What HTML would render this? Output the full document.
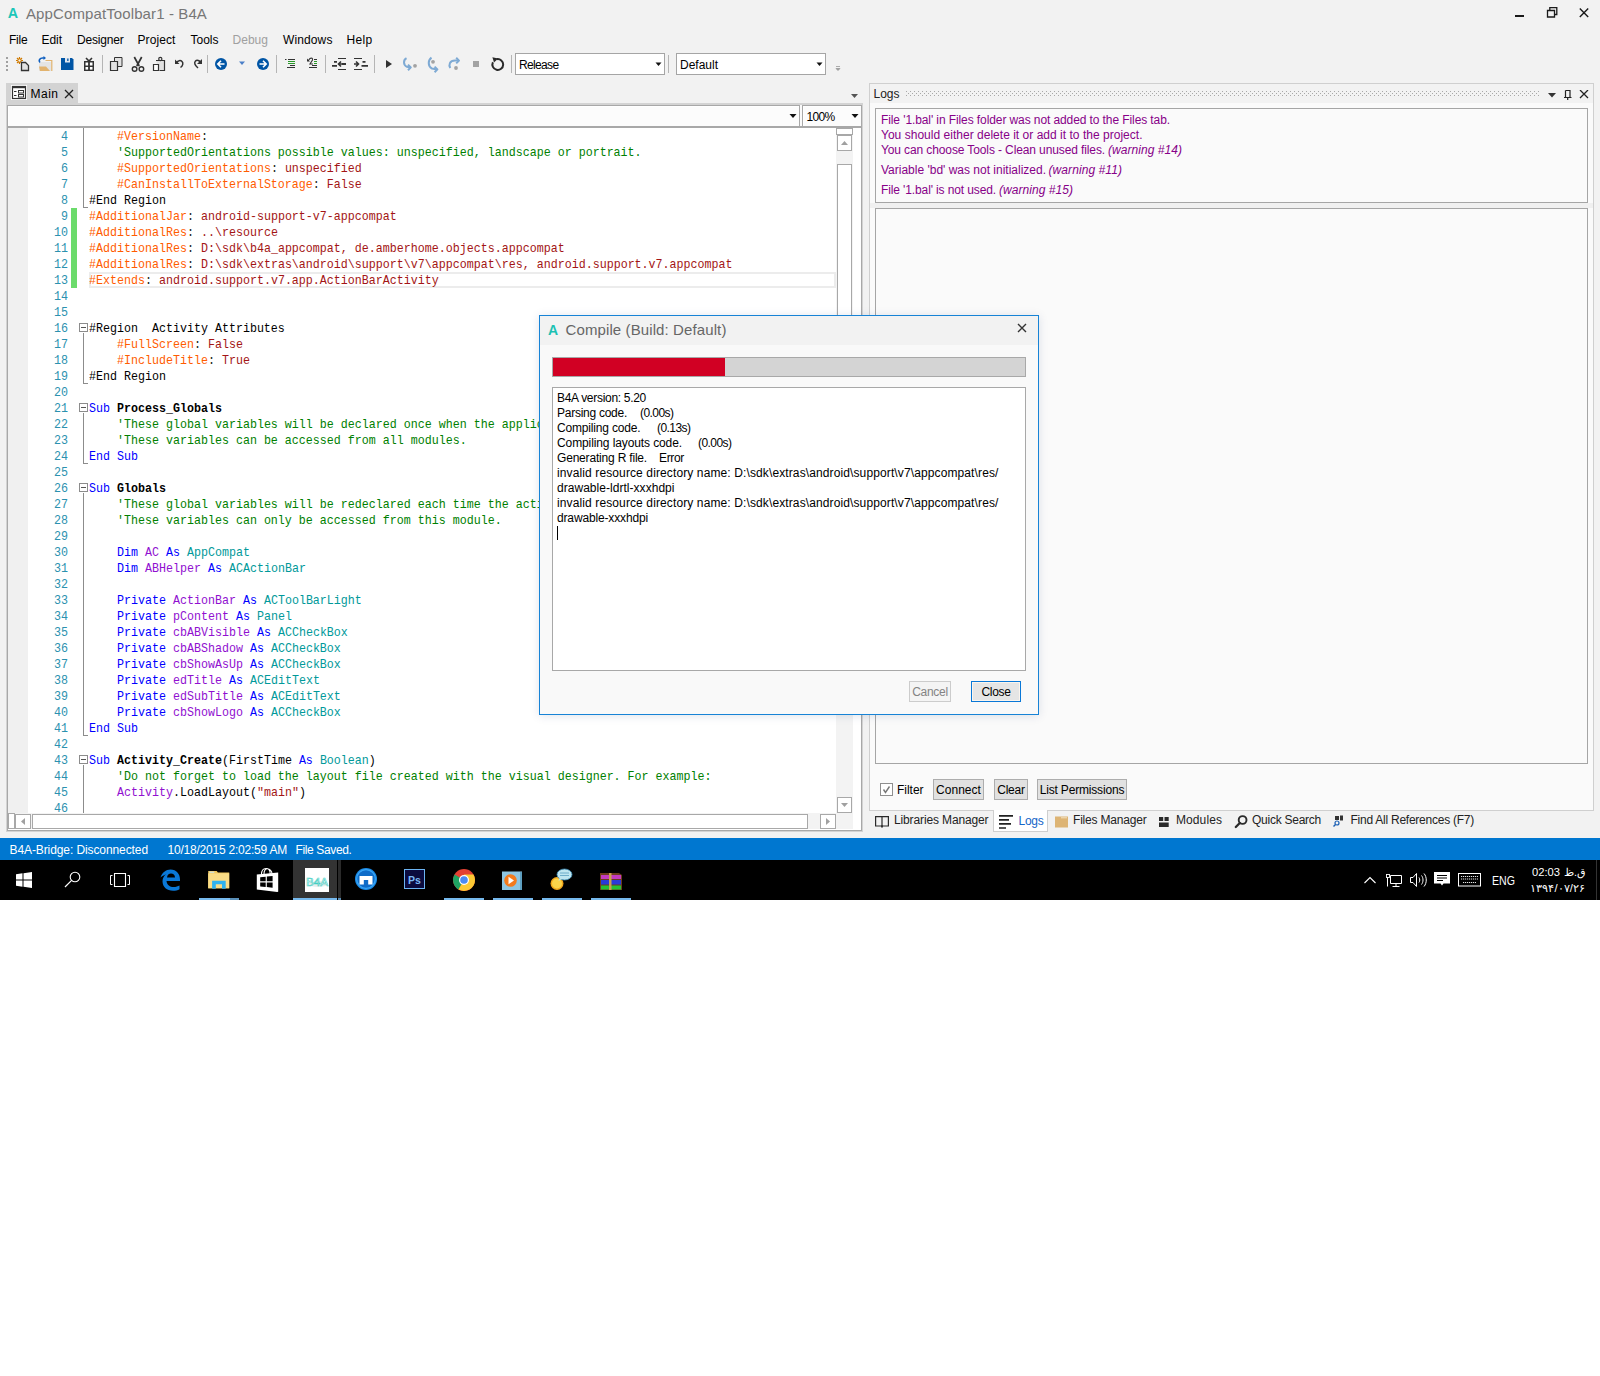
<!DOCTYPE html>
<html><head><meta charset="utf-8"><title>B4A</title>
<style>
*{margin:0;padding:0;box-sizing:border-box}
html,body{width:1600px;height:1376px;background:#fff;overflow:hidden;font-family:"Liberation Sans",sans-serif;color:#000}
.a{position:absolute}
.t{position:absolute;white-space:pre;line-height:1}
#app{position:absolute;left:0;top:0;width:1600px;height:860px;background:#f2f2f2;overflow:hidden}
/* editor */
#edframe{left:6px;top:103px;width:857px;height:729px;background:#d3d3d3}
#edin{left:7px;top:105px;width:855px;height:726px;background:#fff;border:1px solid #a8a8a8}
#code{left:8px;top:128px;width:828px;height:685px;background:#fff;overflow:hidden}
.gut{left:0;top:0;width:20px;height:685px;background:#f0f0f0}
.ln{position:absolute;left:20px;width:40px;text-align:right;height:16px;font:11.67px/16px "Liberation Mono",monospace;color:#2b91af;padding-top:0px;transform:scaleY(1.13);transform-origin:0 3.5px}
.cl{position:absolute;left:81px;height:16px;font:11.67px/16px "Liberation Mono",monospace;white-space:pre;padding-top:0px;transform:scaleY(1.13);transform-origin:0 3px}
.fbox{position:absolute;left:71px;width:9px;height:9px;border:1px solid #8c8c8c;background:#fff}
.fbox:after{content:"";position:absolute;left:1px;top:3px;width:5px;height:1px;background:#555}
.fv{position:absolute;left:75px;width:1px;background:#8c8c8c}
.fh{position:absolute;left:75px;width:5px;height:1px;background:#8c8c8c}
.sbtn{position:absolute;background:#fff;border:1px solid #a8a8a8}
/* logs */
#logpanel{left:869px;top:83px;width:725px;height:728px;background:#fafafa;border:1px solid #cfcfcf}
.btn{position:absolute;height:21px;background:#e1e1e1;border:1px solid #adadad;font-size:12px;line-height:20px;text-align:center;white-space:pre}
.lg{position:absolute;white-space:pre;font-size:12px;line-height:1;color:#870088}
.lg i{font-style:italic}
.dl{position:absolute;left:557px;white-space:pre;font-size:12px;line-height:15px;height:15px;color:#000}
/* dialog */
#dlg{left:539px;top:316px;width:501px;height:400px;background:#f9f9f9;border:1px solid #1883d7;box-shadow:0 0 10px rgba(0,0,0,0.25)}
/* status & taskbar */
#status{left:0;top:838px;width:1600px;height:22px;background:#0077d0}
#taskbar{left:0;top:860px;width:1600px;height:40px;background:#000}
</style></head><body>
<div id="app">
  <!-- title bar -->
  <div class="t" style="left:7.8px;top:5.5px;font-size:14.3px;font-weight:bold;color:#1cc6b9">A</div>
  <div class="t" style="left:26px;top:6px;font-size:15px;color:#777;--w:181px;letter-spacing:0.111px">AppCompatToolbar1 - B4A</div>
  <!-- window buttons -->
  <div class="a" style="left:1515px;top:15px;width:9px;height:2px;background:#1a1a1a"></div>
  <svg class="a" style="left:1546px;top:6px" width="12" height="12"><path d="M1.5 4.5h7v6.5h-7z M3.8 4.5v-2.8h7v6.8h-2.3" fill="none" stroke="#1a1a1a" stroke-width="1.3"/></svg>
  <svg class="a" style="left:1578px;top:7px" width="12" height="12"><path d="M1.8 1.5L10.2 9.9M10.2 1.5L1.8 9.9" stroke="#1a1a1a" stroke-width="1.4"/></svg>

  <!-- menu -->
  <div class="t" style="left:9px;top:34px;font-size:12px;--w:18.5px;letter-spacing:-0.211px">File</div>
  <div class="t" style="left:41.5px;top:34px;font-size:12px;--w:20.5px;letter-spacing:-0.047px">Edit</div>
  <div class="t" style="left:77px;top:34px;font-size:12px;--w:46.5px;letter-spacing:-0.191px">Designer</div>
  <div class="t" style="left:137.5px;top:34px;font-size:12px;--w:38px;letter-spacing:0.092px">Project</div>
  <div class="t" style="left:190.5px;top:34px;font-size:12px;--w:28px;letter-spacing:-0.003px">Tools</div>
  <div class="t" style="left:232.5px;top:34px;font-size:12px;color:#a0a0a0;--w:35.5px;letter-spacing:0.025px">Debug</div>
  <div class="t" style="left:283px;top:34px;font-size:12px;--w:49.5px;letter-spacing:0.116px">Windows</div>
  <div class="t" style="left:346.5px;top:34px;font-size:12px;--w:26px;letter-spacing:0.328px">Help</div>

  <svg class="a" style="left:0;top:50px" width="520" height="28" viewBox="0 50 520 28">
 <!-- grip -->
 <g fill="#a0a0a0"><rect x="6" y="57" width="2" height="2"/><rect x="6" y="61" width="2" height="2"/><rect x="6" y="65" width="2" height="2"/><rect x="6" y="69" width="2" height="2"/></g>
 <!-- new -->
 <g stroke="#d07a00" stroke-width="1.2"><path d="M19.5 57v7M16 60.5h7M17 58l5 5M22 58l-5 5"/></g>
 <circle cx="19.5" cy="60.5" r="1.6" fill="#f2f2f2" stroke="#d07a00" stroke-width="1"/>
 <path d="M21.5 62.5h4l3 3v5h-7z" fill="#e2e2e2" stroke="#333" stroke-width="1.3"/>
 <!-- open -->
 <path d="M39 62h12.5v9H39z" fill="#e4e4e4"/>
 <path d="M45.5 60.5h6.3v10.5" fill="none" stroke="#e2b36e" stroke-width="1.2"/>
 <path d="M39 66.5h7l4 4.5H40z" fill="#e2b36e"/>
 <path d="M40 62.5c-2-2 0-4.5 2.5-4.5h1.5" fill="none" stroke="#1060c0" stroke-width="1.6"/>
 <path d="M43.5 56l2.5 2-2.5 2z" fill="#1060c0"/>
 <!-- save -->
 <path d="M61 58h11l1.5 1.5V70H61z" fill="#0055a5"/>
 <rect x="65" y="58" width="5" height="4.5" fill="#dfe6ef"/>
 <rect x="67.2" y="58.5" width="1.3" height="2.5" fill="#0055a5"/>
 <!-- gift -->
 <rect x="84" y="61" width="10" height="10" fill="#333"/>
 <g fill="#fff"><rect x="85.5" y="62.5" width="2.6" height="3"/><rect x="89.9" y="62.5" width="2.6" height="3"/><rect x="85.5" y="67" width="2.6" height="2.6"/><rect x="89.9" y="67" width="2.6" height="2.6"/></g>
 <path d="M86 58l3 3 3-3" fill="none" stroke="#333" stroke-width="1.6"/>
 <!-- sep -->
 <g fill="#b5b5b5"><rect x="102" y="55" width="1" height="18"/><rect x="207" y="55" width="1" height="18"/><rect x="276" y="55" width="1" height="18"/><rect x="325" y="55" width="1" height="18"/><rect x="374" y="55" width="1" height="18"/><rect x="511" y="55" width="1" height="18"/></g>
 <!-- copy -->
 <path d="M114.5 57.5h7.5v9h-7.5z" fill="#e2e2e2" stroke="#333" stroke-width="1"/>
 <path d="M110.5 61.5h7v9h-7z" fill="#e2e2e2" stroke="#333" stroke-width="1.2"/>
 <!-- cut -->
 <path d="M134.3 57l4.9 9M141.7 57l-4.9 9" stroke="#333" stroke-width="1.7" fill="none"/>
 <circle cx="134.6" cy="69" r="2.3" fill="none" stroke="#333" stroke-width="1.4"/>
 <circle cx="141.4" cy="69" r="2.3" fill="none" stroke="#333" stroke-width="1.4"/>
 <!-- paste -->
 <path d="M156 60.5h8.5v10h-5" fill="#e2e2e2" stroke="#333" stroke-width="1.2"/>
 <circle cx="160.3" cy="59" r="1.6" fill="#f2f2f2" stroke="#333" stroke-width="1.2"/>
 <path d="M153.5 64.5h5v6h-5z" fill="#fff" stroke="#333" stroke-width="1.2"/>
 <!-- undo -->
 <path d="M176.5 62.5c1.5-2 4-2.5 5.5-1s1 4-1.5 6" fill="none" stroke="#333" stroke-width="1.5"/>
 <path d="M175 59.5v4.5h4.5z" fill="#333"/>
 <!-- redo -->
 <path d="M201 62.5c-1.5-2-4-3-5.5-1.5s-1 4 2.5 7" fill="none" stroke="#333" stroke-width="1.5"/>
 <path d="M202 59v5h-5z" fill="#333"/>
 <!-- back -->
 <circle cx="221" cy="64" r="6" fill="#0055a5"/>
 <path d="M224.5 64h-6M221 60.8l-3.2 3.2 3.2 3.2" fill="none" stroke="#fff" stroke-width="1.6"/>
 <path d="M239 61.5h6l-3 3.5z" fill="#4b7fc8"/>
 <!-- fwd -->
 <circle cx="263" cy="64" r="6" fill="#0055a5"/>
 <path d="M259.5 64h6M263 60.8l3.2 3.2-3.2 3.2" fill="none" stroke="#fff" stroke-width="1.6"/>
 <!-- format -->
 <g stroke-width="1" fill="none">
  <path d="M285 59.5h1.5M288 59.5h7" stroke="#333"/>
  <path d="M288 61.5h7M288 63.5h7" stroke="#2a9a2a"/>
  <path d="M290 65.5h5M287 67.5h8" stroke="#333"/>
 </g>
 <!-- comment -->
 <path d="M308 61l2-2.5c1.5-1 3 0 2.5 1.5l-2.5 4h3" fill="none" stroke="#333" stroke-width="1.1"/>
 <path d="M307 58.5v3h3z" fill="#333"/>
 <g stroke-width="1" fill="none"><path d="M314 59.5h3M312 65.5h5M309 67.5h8" stroke="#333"/><path d="M314 61.5h3M314 63.5h3" stroke="#2a9a2a"/></g>
 <!-- outdent -->
 <g stroke="#333" fill="none">
  <path d="M338 58.5h8M338 69.5h8" stroke-width="1"/>
  <path d="M334 61.8h3M332 65.8h5M342 64h4" stroke-width="1.8"/>
  <path d="M342 64h-3.5M341 61.5l-2.5 2.5 2.5 2.5" stroke-width="1.6"/>
 </g>
 <!-- indent -->
 <g stroke="#333" fill="none">
  <path d="M354 58.5h8M354 69.5h8" stroke-width="1"/>
  <path d="M362.5 61.8h3M361.5 65.8h6.5" stroke-width="1.8"/>
  <path d="M354 64h4M356 61.5l2.5 2.5-2.5 2.5" stroke-width="1.6"/>
 </g>
 <!-- play -->
 <path d="M386 60v8l6-4z" fill="#333"/>
 <!-- step over -->
 <g fill="none" stroke="#7eaad4" stroke-width="2" stroke-linejoin="round">
  <path d="M406.5 58.2C403.2 60 403 64.8 407 66.8L410.5 67.4"/>
  <path d="M408 64.6l2.8 2.8-2.8 2.8"/>
 </g>
 <circle cx="415" cy="65.8" r="1.9" fill="#a3a3a3"/>
 <!-- step into -->
 <g fill="none" stroke="#7eaad4" stroke-width="2" stroke-linejoin="round">
  <path d="M431.5 57.6C428 60 427.5 66 432 68.6L437 69.4"/>
  <path d="M434.6 66.6l2.8 2.8-2.8 2.8"/>
 </g>
 <circle cx="433" cy="61.8" r="1.9" fill="#a3a3a3"/>
 <!-- step out -->
 <g fill="none" stroke="#7eaad4" stroke-width="2" stroke-linejoin="round">
  <path d="M450.3 68C448.5 65 449.5 60.6 455 60.6H459"/>
  <path d="M456.2 57.8l2.8 2.8-2.8 2.8"/>
 </g>
 <circle cx="456" cy="68" r="1.9" fill="#a3a3a3"/>
 <!-- stop -->
 <rect x="473" y="61" width="6" height="6" fill="#a3a3a3"/>
 <!-- refresh -->
 <path d="M496.8 59.2A5.4 5.4 0 1 1 492.9 62.2" fill="none" stroke="#2a2a2a" stroke-width="2"/>
 <path d="M492.4 57.2L498.2 58.4L494 62.4z" fill="#2a2a2a"/>
</svg>
<!-- combos -->
<div class="a" style="left:515px;top:53px;width:150px;height:22px;background:#fff;border:1px solid #a5a5a5"></div>
<div class="t" style="left:519px;top:58.5px;font-size:12px;--w:39.5px;letter-spacing:-0.647px">Release</div>
<svg class="a" style="left:654px;top:60.5px" width="10" height="6"><path d="M1.5 1.5h6l-3 3.5z" fill="#111"/></svg>
<div class="a" style="left:668px;top:55px;width:1px;height:18px;background:#b5b5b5"></div>
<div class="a" style="left:676px;top:53px;width:150px;height:22px;background:#fff;border:1px solid #a5a5a5"></div>
<div class="t" style="left:680px;top:58.5px;font-size:12px;--w:38px;letter-spacing:-0.004px">Default</div>
<svg class="a" style="left:815px;top:60.5px" width="10" height="6"><path d="M1.5 1.5h6l-3 3.5z" fill="#111"/></svg>
<svg class="a" style="left:834px;top:64px" width="8" height="8"><path d="M2 2.5h4M2 4.5h4l-2 2z" stroke="#999" stroke-width="0.8" fill="#999"/></svg>


  <!-- tab -->
  <div class="a" style="left:6px;top:83px;width:72px;height:22px;background:#d3d3d3"></div>
  <svg class="a" style="left:10px;top:84px" width="18" height="17"><rect x="1" y="1" width="16" height="15" fill="#fff"/><rect x="2.5" y="2.5" width="13" height="12" fill="none" stroke="#333" stroke-width="1.2"/><rect x="2" y="2" width="14" height="2.2" fill="#333"/><path d="M4 7.5h2.5M4 11.5h2.5" stroke="#333" stroke-width="1.1"/><rect x="8.5" y="6.5" width="5" height="2.5" fill="none" stroke="#333" stroke-width="1"/><rect x="8.5" y="10.5" width="5" height="2.5" fill="none" stroke="#333" stroke-width="1"/></svg>
<div class="t" style="left:30.5px;top:88px;font-size:12px;--w:28px;letter-spacing:0.496px">Main</div>
  <svg class="a" style="left:64px;top:89px" width="10" height="10"><path d="M1 1L9 9M9 1L1 9" stroke="#222" stroke-width="1.3"/></svg>
  <svg class="a" style="left:848px;top:92px" width="12" height="8"><path d="M3 2h7l-3.5 4z" fill="#555"/></svg>

  <!-- editor -->
  <div id="edframe" class="a"></div>
  <div id="edin" class="a"></div>
  <div class="a" style="left:7px;top:105px;width:793px;height:22px;background:#fcfcfc;border:1px solid #a8a8a8;box-shadow:inset 1px 1px 0 #fff"></div>
  <div class="a" style="left:800px;top:105px;width:2px;height:22px;background:#fafafa"></div>
  <div class="a" style="left:802px;top:105px;width:60px;height:22px;background:#fcfcfc;border:1px solid #a8a8a8;box-shadow:inset 1px 1px 0 #fff"></div>
  <div class="a" style="left:8px;top:126px;width:853px;height:2px;background:#a8a8a8"></div>
  <svg class="a" style="left:788px;top:112px" width="10" height="8"><path d="M1.5 2h7l-3.5 4z" fill="#111"/></svg>
  <svg class="a" style="left:850px;top:112px" width="10" height="8"><path d="M1.5 2h7l-3.5 4z" fill="#111"/></svg>
  <div class="t" style="left:806.5px;top:111px;font-size:12px;--w:28px;letter-spacing:-0.676px">100%</div>

  <div id="code" class="a">
    <div class="a gut"></div>
    <div class="a" style="left:63px;top:80px;width:6px;height:80px;background:#6bdb6b"></div>
    <div class="a" style="left:81px;top:144px;width:747px;height:16px;border:2px solid #ececec"></div>
<div class="ln" style="top:0px">4</div><div class="cl" style="top:0px"><span style="color:#000000">    </span><span style="color:#ff5c00">#VersionName</span><span style="color:#222222">:</span></div>
<div class="ln" style="top:16px">5</div><div class="cl" style="top:16px"><span style="color:#000000">    </span><span style="color:#008000">&#x27;SupportedOrientations possible values: unspecified, landscape or portrait.</span></div>
<div class="ln" style="top:32px">6</div><div class="cl" style="top:32px"><span style="color:#000000">    </span><span style="color:#ff5c00">#SupportedOrientations</span><span style="color:#222222">: </span><span style="color:#a31515">unspecified</span></div>
<div class="ln" style="top:48px">7</div><div class="cl" style="top:48px"><span style="color:#000000">    </span><span style="color:#ff5c00">#CanInstallToExternalStorage</span><span style="color:#222222">: </span><span style="color:#a31515">False</span></div>
<div class="ln" style="top:64px">8</div><div class="cl" style="top:64px"><span style="color:#000000">#End Region</span></div>
<div class="ln" style="top:80px">9</div><div class="cl" style="top:80px"><span style="color:#ff5c00">#AdditionalJar</span><span style="color:#222222">: </span><span style="color:#a31515">android-support-v7-appcompat</span></div>
<div class="ln" style="top:96px">10</div><div class="cl" style="top:96px"><span style="color:#ff5c00">#AdditionalRes</span><span style="color:#222222">: </span><span style="color:#a31515">..\resource</span></div>
<div class="ln" style="top:112px">11</div><div class="cl" style="top:112px"><span style="color:#ff5c00">#AdditionalRes</span><span style="color:#222222">: </span><span style="color:#a31515">D:\sdk\b4a_appcompat, de.amberhome.objects.appcompat</span></div>
<div class="ln" style="top:128px">12</div><div class="cl" style="top:128px"><span style="color:#ff5c00">#AdditionalRes</span><span style="color:#222222">: </span><span style="color:#a31515">D:\sdk\extras\android\support\v7\appcompat\res, android.support.v7.appcompat</span></div>
<div class="ln" style="top:144px">13</div><div class="cl" style="top:144px"><span style="color:#ff5c00">#Extends</span><span style="color:#222222">: </span><span style="color:#a31515">android.support.v7.app.ActionBarActivity</span></div>
<div class="ln" style="top:160px">14</div><div class="cl" style="top:160px"></div>
<div class="ln" style="top:176px">15</div><div class="cl" style="top:176px"></div>
<div class="ln" style="top:192px">16</div><div class="cl" style="top:192px"><span style="color:#000000">#Region  Activity Attributes</span></div>
<div class="ln" style="top:208px">17</div><div class="cl" style="top:208px"><span style="color:#000000">    </span><span style="color:#ff5c00">#FullScreen</span><span style="color:#222222">: </span><span style="color:#a31515">False</span></div>
<div class="ln" style="top:224px">18</div><div class="cl" style="top:224px"><span style="color:#000000">    </span><span style="color:#ff5c00">#IncludeTitle</span><span style="color:#222222">: </span><span style="color:#a31515">True</span></div>
<div class="ln" style="top:240px">19</div><div class="cl" style="top:240px"><span style="color:#000000">#End Region</span></div>
<div class="ln" style="top:256px">20</div><div class="cl" style="top:256px"></div>
<div class="ln" style="top:272px">21</div><div class="cl" style="top:272px"><span style="color:#0000ff">Sub </span><span style="color:#000000;font-weight:bold">Process_Globals</span></div>
<div class="ln" style="top:288px">22</div><div class="cl" style="top:288px"><span style="color:#000000">    </span><span style="color:#008000">&#x27;These global variables will be declared once when the application starts.</span></div>
<div class="ln" style="top:304px">23</div><div class="cl" style="top:304px"><span style="color:#000000">    </span><span style="color:#008000">&#x27;These variables can be accessed from all modules.</span></div>
<div class="ln" style="top:320px">24</div><div class="cl" style="top:320px"><span style="color:#0000ff">End Sub</span></div>
<div class="ln" style="top:336px">25</div><div class="cl" style="top:336px"></div>
<div class="ln" style="top:352px">26</div><div class="cl" style="top:352px"><span style="color:#0000ff">Sub </span><span style="color:#000000;font-weight:bold">Globals</span></div>
<div class="ln" style="top:368px">27</div><div class="cl" style="top:368px"><span style="color:#000000">    </span><span style="color:#008000">&#x27;These global variables will be redeclared each time the activity is created.</span></div>
<div class="ln" style="top:384px">28</div><div class="cl" style="top:384px"><span style="color:#000000">    </span><span style="color:#008000">&#x27;These variables can only be accessed from this module.</span></div>
<div class="ln" style="top:400px">29</div><div class="cl" style="top:400px"></div>
<div class="ln" style="top:416px">30</div><div class="cl" style="top:416px"><span style="color:#000000">    </span><span style="color:#0000ff">Dim </span><span style="color:#9010d0">AC </span><span style="color:#0000ff">As </span><span style="color:#00999a">AppCompat</span></div>
<div class="ln" style="top:432px">31</div><div class="cl" style="top:432px"><span style="color:#000000">    </span><span style="color:#0000ff">Dim </span><span style="color:#9010d0">ABHelper </span><span style="color:#0000ff">As </span><span style="color:#00999a">ACActionBar</span></div>
<div class="ln" style="top:448px">32</div><div class="cl" style="top:448px"></div>
<div class="ln" style="top:464px">33</div><div class="cl" style="top:464px"><span style="color:#000000">    </span><span style="color:#0000ff">Private </span><span style="color:#9010d0">ActionBar </span><span style="color:#0000ff">As </span><span style="color:#00999a">ACToolBarLight</span></div>
<div class="ln" style="top:480px">34</div><div class="cl" style="top:480px"><span style="color:#000000">    </span><span style="color:#0000ff">Private </span><span style="color:#9010d0">pContent </span><span style="color:#0000ff">As </span><span style="color:#00999a">Panel</span></div>
<div class="ln" style="top:496px">35</div><div class="cl" style="top:496px"><span style="color:#000000">    </span><span style="color:#0000ff">Private </span><span style="color:#9010d0">cbABVisible </span><span style="color:#0000ff">As </span><span style="color:#00999a">ACCheckBox</span></div>
<div class="ln" style="top:512px">36</div><div class="cl" style="top:512px"><span style="color:#000000">    </span><span style="color:#0000ff">Private </span><span style="color:#9010d0">cbABShadow </span><span style="color:#0000ff">As </span><span style="color:#00999a">ACCheckBox</span></div>
<div class="ln" style="top:528px">37</div><div class="cl" style="top:528px"><span style="color:#000000">    </span><span style="color:#0000ff">Private </span><span style="color:#9010d0">cbShowAsUp </span><span style="color:#0000ff">As </span><span style="color:#00999a">ACCheckBox</span></div>
<div class="ln" style="top:544px">38</div><div class="cl" style="top:544px"><span style="color:#000000">    </span><span style="color:#0000ff">Private </span><span style="color:#9010d0">edTitle </span><span style="color:#0000ff">As </span><span style="color:#00999a">ACEditText</span></div>
<div class="ln" style="top:560px">39</div><div class="cl" style="top:560px"><span style="color:#000000">    </span><span style="color:#0000ff">Private </span><span style="color:#9010d0">edSubTitle </span><span style="color:#0000ff">As </span><span style="color:#00999a">ACEditText</span></div>
<div class="ln" style="top:576px">40</div><div class="cl" style="top:576px"><span style="color:#000000">    </span><span style="color:#0000ff">Private </span><span style="color:#9010d0">cbShowLogo </span><span style="color:#0000ff">As </span><span style="color:#00999a">ACCheckBox</span></div>
<div class="ln" style="top:592px">41</div><div class="cl" style="top:592px"><span style="color:#0000ff">End Sub</span></div>
<div class="ln" style="top:608px">42</div><div class="cl" style="top:608px"></div>
<div class="ln" style="top:624px">43</div><div class="cl" style="top:624px"><span style="color:#0000ff">Sub </span><span style="color:#000000;font-weight:bold">Activity_Create</span><span style="color:#000000">(FirstTime </span><span style="color:#0000ff">As </span><span style="color:#00999a">Boolean</span><span style="color:#000000">)</span></div>
<div class="ln" style="top:640px">44</div><div class="cl" style="top:640px"><span style="color:#000000">    </span><span style="color:#008000">&#x27;Do not forget to load the layout file created with the visual designer. For example:</span></div>
<div class="ln" style="top:656px">45</div><div class="cl" style="top:656px"><span style="color:#000000">    </span><span style="color:#9010d0">Activity</span><span style="color:#000000">.LoadLayout(</span><span style="color:#a31515">&quot;main&quot;</span><span style="color:#000000">)</span></div>
<div class="ln" style="top:672px">46</div><div class="cl" style="top:672px"></div>
<div class="fv" style="top:0px;height:79px"></div><div class="fh" style="top:79px"></div>
<div class="fbox" style="top:195px"></div>
<div class="fv" style="top:205px;height:50px"></div><div class="fh" style="top:255px"></div>
<div class="fbox" style="top:275px"></div>
<div class="fv" style="top:285px;height:50px"></div><div class="fh" style="top:335px"></div>
<div class="fbox" style="top:355px"></div>
<div class="fv" style="top:365px;height:242px"></div><div class="fh" style="top:607px"></div>
<div class="fbox" style="top:627px"></div>
<div class="fv" style="top:637px;height:51px"></div>
  </div>
  <!-- vertical scrollbar -->
  <div class="a" style="left:836px;top:128px;width:17px;height:685px;background:#f3f3f3"></div>
  <div class="sbtn" style="left:836px;top:128px;width:17px;height:7px"></div>
  <div class="sbtn" style="left:837px;top:135px;width:15px;height:16px"></div>
  <svg class="a" style="left:837px;top:135px" width="15" height="16"><path d="M4 10h7l-3.5-4z" fill="#a0a0a0"/></svg>
  <div class="sbtn" style="left:837px;top:164px;width:15px;height:536px"></div>
  <div class="sbtn" style="left:837px;top:797px;width:15px;height:16px"></div>
  <svg class="a" style="left:837px;top:797px" width="15" height="16"><path d="M4 6h7l-3.5 4z" fill="#a0a0a0"/></svg>
  <div class="a" style="left:853px;top:128px;width:8px;height:702px;background:#fff"></div>
  <!-- horizontal scrollbar -->
  <div class="a" style="left:8px;top:813px;width:845px;height:16px;background:#f3f3f3"></div>
  <div class="sbtn" style="left:8px;top:813px;width:7px;height:16px"></div>
  <div class="sbtn" style="left:15px;top:814px;width:16px;height:15px"></div>
  <svg class="a" style="left:15px;top:814px" width="16" height="15"><path d="M10 4v7l-4-3.5z" fill="#a0a0a0"/></svg>
  <div class="sbtn" style="left:32px;top:814px;width:776px;height:15px"></div>
  <div class="sbtn" style="left:820px;top:814px;width:16px;height:15px"></div>
  <svg class="a" style="left:820px;top:814px" width="16" height="15"><path d="M6 4v7l4-3.5z" fill="#a0a0a0"/></svg>
  <div class="a" style="left:8px;top:829px;width:853px;height:1px;background:#fff"></div>

  <!-- logs panel -->
  <div class="a" style="left:869px;top:83px;width:725px;height:728px;background:#fafafa;border:1px solid #cfcfcf"></div>
<div class="a" style="left:870px;top:84px;width:723px;height:19px;background:#f2f2f2"></div>
<div class="t" style="left:873.5px;top:88px;font-size:12px;color:#222;--w:26px;letter-spacing:-0.008px">Logs</div>
<svg class="a" style="left:906px;top:90px" width="634" height="7">
 <defs><pattern id="dots" x="0" y="0" width="4" height="4" patternUnits="userSpaceOnUse"><rect x="0" y="1" width="1" height="1" fill="#a8a8a8"/><rect x="2" y="3" width="1" height="1" fill="#a8a8a8"/></pattern></defs>
 <rect x="0" y="0" width="633" height="6" fill="url(#dots)"/>
</svg>
<svg class="a" style="left:1546px;top:90px" width="46" height="10">
 <path d="M2 3h8l-4 4.5z" fill="#333"/>
 <path d="M19.5 0.5h4.5v7M19.5 0.5v7M18 7.5h7.5M21.7 7.5v3" fill="none" stroke="#222" stroke-width="1.2"/>
 <path d="M34 0l8 8M42 0l-8 8" stroke="#222" stroke-width="1.3"/>
</svg>
<div class="a" style="left:870px;top:203px;width:723px;height:5px;background:#f0f0f0"></div>
<div class="a" style="left:875px;top:108px;width:713px;height:95px;background:#fafafa;border:1px solid #a5a5a5"></div>
<div class="lg" style="left:881px;top:114px;--w:289px;letter-spacing:-0.096px">File '1.bal' in Files folder was not added to the Files tab.</div>
<div class="lg" style="left:881px;top:129px;--w:261.5px;letter-spacing:0.021px">You should either delete it or add it to the project.</div>
<div class="lg" style="left:881px;top:144px;--w:224px;letter-spacing:-0.115px">You can choose Tools - Clean unused files.</div><div class="lg" style="left:1108px;top:144px;--w:74px;letter-spacing:0.048px"><i>(warning #14)</i></div>
<div class="lg" style="left:881px;top:164px;--w:165px;letter-spacing:-0.004px">Variable 'bd' was not initialized.</div><div class="lg" style="left:1048.5px;top:164px;--w:73.5px;letter-spacing:0.078px"><i>(warning #11)</i></div>
<div class="lg" style="left:881px;top:184px;--w:115px;letter-spacing:-0.119px">File '1.bal' is not used.</div><div class="lg" style="left:999px;top:184px;--w:74px;letter-spacing:0.048px"><i>(warning #15)</i></div>
<div class="a" style="left:875px;top:208px;width:713px;height:556px;background:#fafafa;border:1px solid #a5a5a5"></div>
<!-- filter row -->
<div class="a" style="left:880px;top:783px;width:13px;height:13px;background:#fff;border:1px solid #8f8f8f"></div>
<svg class="a" style="left:880px;top:783px" width="13" height="13"><path d="M3.5 6.5l2 3 4-6" fill="none" stroke="#777" stroke-width="1.4"/></svg>
<div class="t" style="left:897px;top:784px;font-size:12px;--w:26.5px;letter-spacing:-0.029px">Filter</div>
<div class="btn" style="left:933px;top:779px;width:51px"><span style="display:inline-block;--w:45px;letter-spacing:0.042px">Connect</span></div>
<div class="btn" style="left:994px;top:779px;width:34px"><span style="display:inline-block;--w:27.5px;letter-spacing:-0.237px">Clear</span></div>
<div class="btn" style="left:1037px;top:779px;width:90px"><span style="display:inline-block;--w:84.5px;letter-spacing:-0.179px">List Permissions</span></div>
<!-- bottom tabs -->
<div class="a" style="left:993px;top:810px;width:55px;height:22px;background:#fff;border:1px solid #cfcfcf;border-top:none"></div>
<svg class="a" style="left:874px;top:814px" width="17" height="15"><path d="M1.6 2.6h6.4v9.4H1.6zM8 2.6h6.4v9.4H8z" fill="none" stroke="#2a2a2a" stroke-width="1.2"/><path d="M8 11.5v2" stroke="#2a2a2a" stroke-width="1.8"/></svg>
<div class="t" style="left:894px;top:813.5px;font-size:12px;color:#222;--w:94.5px;letter-spacing:-0.131px">Libraries Manager</div>
<svg class="a" style="left:998px;top:813px" width="16" height="17"><g stroke="#222" stroke-width="1.7"><path d="M1 2.8h14M1 6.8h10M1 10.8h12M1 15h7"/></g></svg>
<div class="t" style="left:1018.5px;top:814.5px;font-size:12px;color:#1565c8;--w:25px;letter-spacing:-0.258px">Logs</div>
<svg class="a" style="left:1054px;top:815px" width="16" height="14"><path d="M1 1.5h13v11H1z" fill="#ddb474"/><path d="M7 2.3h6v1H7z" fill="#f4e2c0"/></svg>
<div class="t" style="left:1073px;top:813.5px;font-size:12px;color:#222;--w:73.5px;letter-spacing:-0.195px">Files Manager</div>
<svg class="a" style="left:1158px;top:816px" width="13" height="13"><g fill="#2a2a2a"><rect x="1" y="1" width="4.2" height="4"/><rect x="6.5" y="1" width="4.2" height="4"/><rect x="1" y="6.5" width="9.7" height="4.5"/></g></svg>
<div class="t" style="left:1176px;top:813.5px;font-size:12px;color:#222;--w:46px;letter-spacing:0.092px">Modules</div>
<svg class="a" style="left:1234px;top:814px" width="15" height="16"><circle cx="8.6" cy="6" r="3.9" fill="none" stroke="#2a2a2a" stroke-width="1.9"/><path d="M5.8 9l-4 4" stroke="#2a2a2a" stroke-width="2.3" stroke-linecap="round"/></svg>
<div class="t" style="left:1252px;top:813.5px;font-size:12px;color:#222;--w:69px;letter-spacing:-0.253px">Quick Search</div>
<svg class="a" style="left:1332px;top:815px" width="16" height="14"><g fill="#333"><rect x="3" y="1" width="4" height="4"/><rect x="8" y="0.5" width="3" height="5"/></g><circle cx="5" cy="8" r="2" fill="none" stroke="#1a5fb4" stroke-width="1.2"/><path d="M3.5 9.5l-2 2" stroke="#1a5fb4" stroke-width="1.4"/></svg>
<div class="t" style="left:1350.5px;top:813.5px;font-size:12px;color:#222;--w:123.5px;letter-spacing:-0.245px">Find All References (F7)</div>


  <!-- status -->
  <div id="status" class="a"></div>
  <div class="t" style="left:9.5px;top:844px;font-size:12px;color:#fff;--w:138.5px;letter-spacing:-0.094px">B4A-Bridge: Disconnected</div>
  <div class="t" style="left:167.5px;top:844px;font-size:12px;color:#fff;--w:119.5px;letter-spacing:-0.219px">10/18/2015 2:02:59 AM</div>
  <div class="t" style="left:295.5px;top:844px;font-size:12px;color:#fff;--w:56px;letter-spacing:-0.366px">File Saved.</div>
</div>
<div id="taskbar" class="a"><svg class="a" style="left:0;top:0" width="1600" height="40" viewBox="0 860 1600 40">
 <!-- windows logo -->
 <path d="M16 874.2l6.5-0.9v6.2H16zM23.5 873.2L32 872v7.5h-8.5zM16 880.5h6.5v6.2L16 885.8zM23.5 880.5H32v7.5l-8.5-1.2z" fill="#fff"/>
 <!-- search -->
 <circle cx="75" cy="877" r="4.8" fill="none" stroke="#fff" stroke-width="1.1"/>
 <path d="M71.6 880.4L65 887" stroke="#fff" stroke-width="1.2"/>
 <!-- task view -->
 <path d="M114.5 873.5h11v13h-11z" fill="none" stroke="#fff" stroke-width="1.1"/>
 <path d="M112.5 875.5h-2v9h2M127.5 875.5h2v9h-2" fill="none" stroke="#fff" stroke-width="1"/>
 <!-- edge -->
 <path d="M160.5 877.5c1.5-5 5.5-8 10-8 6 0 9.5 4.5 9.5 10v1.5h-13.5c0.5 4 3.5 6 7 6 2.5 0 4.5-0.7 6-1.5v3.8c-1.8 1-4 1.5-6.5 1.5-6 0-10.5-3.8-10.5-9.5 0-3 1.5-5.5 3.5-7-2 0.8-4 2-5.5 3.2zM167 877.5h8c0-2.5-1.8-4-4-4s-3.7 1.5-4 4z" fill="#0a78d7"/>
 <!-- explorer -->
 <path d="M208.2 871h8.5l1.2 1.5H229.2V888.3h-21z" fill="#f0c65a"/>
 <path d="M208.2 873.3h21v15h-21z" fill="#fadd86"/>
 <rect x="209.3" y="871.6" width="5" height="1.2" fill="#cfe8f0"/>
 <path d="M212.1 880.8h13.6v8h-3.7v-4.6h-6.2v4.6h-3.7z" fill="#2fb3ef"/>
 <rect x="199" y="898" width="31" height="2" fill="#76b9ed"/>
 <rect x="230" y="898" width="9" height="2" fill="#5a8fb8"/>
 <!-- store -->
 <path d="M256.8 874.5l21.4-2v19.2l-1 0.3-20.4-2.6z" fill="#fff"/>
 <path d="M261.5 874.5c0-3.5 1.8-6 4.5-6s4.2 2 4.2 5.5M264 874c0-3 1.2-5.3 3.5-5.3s4.5 2.5 4.5 5" fill="none" stroke="#fff" stroke-width="1.1"/>
 <path d="M260.2 877.2l5.5-0.5v4.6h-5.5zM266.8 876.6l5.8-0.6v5.3h-5.8zM260.2 882.4h5.5v4.6l-5.5-0.6zM266.8 882.4h5.8v5.4l-5.8-0.7z" fill="#000"/>
 <!-- b4a active -->
 <rect x="293" y="860" width="44" height="38" fill="#333"/>
 <rect x="338" y="860" width="3" height="38" fill="#2a2a2a"/>
 <rect x="293" y="898" width="44" height="2" fill="#76b9ed"/>
 <rect x="338" y="898" width="3" height="2" fill="#5a8fb8"/>
 <rect x="305" y="868" width="24" height="24" fill="#fff"/>
 <ellipse cx="318" cy="884" rx="10" ry="3" fill="#e6eeee"/>
 <text x="306" y="885.5" font-family="Liberation Sans" font-size="11" fill="none" stroke="#42cfc4" stroke-width="0.55" textLength="22" lengthAdjust="spacingAndGlyphs">B4A</text>
 <!-- maxthon -->
 <circle cx="366" cy="879" r="11" fill="#1a8ae6"/>
 <circle cx="366" cy="879" r="9.3" fill="#0f6cc8" stroke="#3aa6f5" stroke-width="1.2"/>
 <path d="M359.5 884.5v-8.5h13v8.5h-4.3v-4.5h-4.4v4.5z" fill="#fff"/>
 <!-- photoshop -->
 <rect x="404.5" y="869.5" width="20" height="19" fill="#0b0b3e" stroke="#6cb4f2" stroke-width="1"/>
 <text x="408" y="884" font-family="Liberation Sans" font-weight="bold" font-size="10.5" fill="#7ab8f5">Ps</text>
 <!-- chrome -->
 <circle cx="464" cy="880" r="11" fill="#e34133"/>
 <path d="M464 880L454.5 874.5A11 11 0 0 0 458.5 889.5z" fill="#1ea362"/>
 <path d="M464 880L458.5 889.5A11 11 0 0 0 475 880z" fill="#fcc934"/>
 <path d="M464 880L475 880A11 11 0 0 0 473.5 874.5L464 874.5z" fill="#fcc934"/>
 <circle cx="464" cy="880" r="5" fill="#fff"/>
 <circle cx="464" cy="880" r="3.8" fill="#4a8af4"/>
 <rect x="444" y="898" width="40" height="2" fill="#76b9ed"/>
 <!-- media player -->
 <rect x="502" y="871.5" width="20" height="18.5" fill="#8fc6e2"/>
 <rect x="520" y="872" width="2" height="18" fill="#5e9fc0"/>
 <circle cx="510.5" cy="880.5" r="6.3" fill="#f47a1c"/>
 <path d="M508.5 876.8v7.5l5.5-3.75z" fill="#fff"/>
 <rect x="493" y="898" width="40" height="2" fill="#76b9ed"/>
 <!-- chat -->
 <circle cx="557" cy="883.5" r="6.5" fill="#f3a81c"/>
 <circle cx="557" cy="883.5" r="5" fill="#fbd44a"/>
 <ellipse cx="564.5" cy="874.5" rx="7.5" ry="5.5" fill="#bfe6f0" stroke="#3a8ab5" stroke-width="0.8"/>
 <path d="M560 877l-1.5 4 4-2.5" fill="#bfe6f0"/>
 <path d="M560 873h9M560 875.5h9" stroke="#5aa0c0" stroke-width="0.8"/>
 <rect x="542" y="898" width="40" height="2" fill="#76b9ed"/>
 <!-- winrar -->
 <path d="M600 873h19l3 2v15h-22z" fill="#6b3c1a"/>
 <rect x="601" y="875" width="20" height="4" fill="#c23bc0"/>
 <rect x="601" y="880" width="20" height="4.5" fill="#2a3ad8"/>
 <rect x="601" y="885.5" width="20" height="4" fill="#26c232"/>
 <rect x="609" y="873" width="2.5" height="17" fill="#c8a050"/>
 <rect x="591" y="898" width="40" height="2" fill="#76b9ed"/>
 <!-- tray -->
 <path d="M1364.5 883l5.5-5.5 5.5 5.5" fill="none" stroke="#fff" stroke-width="1.1"/>
 <path d="M1390.5 875.5h11v8h-11zM1396 883.5v3M1392.5 886.5h7" fill="none" stroke="#fff" stroke-width="1"/>
 <rect x="1386.5" y="874.5" width="3" height="3" fill="#000" stroke="#fff" stroke-width="0.9"/>
 <path d="M1387.5 877.5v9" stroke="#fff" stroke-width="1"/>
 <path d="M1410.5 877.5h2.5l3.5-4v13l-3.5-4h-2.5z" fill="none" stroke="#fff" stroke-width="1"/>
 <path d="M1419 877.5c1 1.5 1 3.5 0 5M1421.5 875.5c2 2.5 2 6.5 0 9M1424 873.5c3 3.5 3 9.5 0 13" fill="none" stroke="#fff" stroke-width="1"/>
 <path d="M1434 872h16v11.5h-6.5l-1.5 2-1.5-2H1434z" fill="#fff"/>
 <path d="M1437 875.5h10M1437 878h10M1437 880.5h6" stroke="#000" stroke-width="1"/>
 <rect x="1458.5" y="873.5" width="22" height="12.5" fill="none" stroke="#fff" stroke-width="1"/>
 <path d="M1461 876.5h17M1461 879h17M1463 882.5h13" stroke="#fff" stroke-width="0.9" stroke-dasharray="1.2 0.8"/>
 <text x="1492" y="884.5" font-family="Liberation Sans" font-size="12" fill="#fff" textLength="23" lengthAdjust="spacingAndGlyphs">ENG</text>
 <text x="1532" y="876" font-family="Liberation Sans" font-size="11" fill="#fff" textLength="28" lengthAdjust="spacingAndGlyphs">02:03</text>
 <text x="1564" y="876" font-family="Liberation Sans" font-size="11" fill="#fff">ق.ظ</text>
 <text x="1530" y="892" font-family="Liberation Sans" font-size="11" fill="#fff" textLength="55" lengthAdjust="spacingAndGlyphs">١٣٩۴/٠٧/٢۶</text>
 <rect x="1596" y="860" width="1" height="40" fill="#333"/>
</svg>
</div>
<div class="a" style="left:539px;top:315px;width:500px;height:400px;background:#f9f9f9;border:1px solid #1783d6;box-shadow:0 1px 9px rgba(0,50,110,0.13)"></div>
<div class="a" style="left:540px;top:316px;width:498px;height:29px;background:#f2f2f2"></div>
<div class="t" style="left:548px;top:323px;font-size:14px;font-weight:bold;color:#1cc1b3">A</div>
<div class="t" style="left:565.5px;top:322px;font-size:15px;color:#666;--w:161px;letter-spacing:0.108px">Compile (Build: Default)</div>
<svg class="a" style="left:1017px;top:323px" width="10" height="10"><path d="M1 1l8 8M9 1l-8 8" stroke="#333" stroke-width="1.4"/></svg>
<div class="a" style="left:552px;top:357px;width:474px;height:20px;background:#d4d4d4;border:1px solid #a8a8a8"></div>
<div class="a" style="left:553px;top:358px;width:172px;height:18px;background:#d10023"></div>
<div class="a" style="left:552px;top:387px;width:474px;height:284px;background:#fff;border:1px solid #a8a8a8"></div>
<div class="dl" style="top:391px;--w:89px;letter-spacing:-0.298px">B4A version: 5.20</div>
<div class="dl" style="top:406px;--w:70px;letter-spacing:-0.261px">Parsing code.</div><div class="dl" style="left:640px;top:406px;--w:33.5px;letter-spacing:-0.551px">(0.00s)</div>
<div class="dl" style="top:421px;--w:83.5px;letter-spacing:-0.170px">Compiling code.</div><div class="dl" style="left:657px;top:421px;--w:33.5px;letter-spacing:-0.551px">(0.13s)</div>
<div class="dl" style="top:436px;--w:125px;letter-spacing:-0.105px">Compiling layouts code.</div><div class="dl" style="left:698px;top:436px;--w:33.5px;letter-spacing:-0.551px">(0.00s)</div>
<div class="dl" style="top:451px;--w:90px;letter-spacing:-0.188px">Generating R file.</div><div class="dl" style="left:659px;top:451px;--w:25px;letter-spacing:-0.334px">Error</div>
<div class="dl" style="top:466px;--w:441.5px;letter-spacing:0.116px">invalid resource directory name: D:\sdk\extras\android\support\v7\appcompat\res/</div>
<div class="dl" style="top:481px;--w:117.5px;letter-spacing:0.036px">drawable-ldrtl-xxxhdpi</div>
<div class="dl" style="top:496px;--w:441.5px;letter-spacing:0.116px">invalid resource directory name: D:\sdk\extras\android\support\v7\appcompat\res/</div>
<div class="dl" style="top:511px;--w:91px;letter-spacing:-0.149px">drawable-xxxhdpi</div>
<div class="a" style="left:557px;top:526px;width:1px;height:14px;background:#000"></div>
<div class="btn" style="left:909px;top:681px;width:42px;height:21px;background:#f4f4f4;border-color:#cccccc;color:#838383"><span style="display:inline-block;--w:35.5px;letter-spacing:-0.310px">Cancel</span></div>
<div class="btn" style="left:971px;top:681px;width:50px;height:21px;background:#e5e5e5;border:1px solid #0a78d7;box-shadow:inset 0 0 0 1px #fbf5ee"><span style="display:inline-block;--w:29px;letter-spacing:-0.338px">Close</span></div>

</body></html>
